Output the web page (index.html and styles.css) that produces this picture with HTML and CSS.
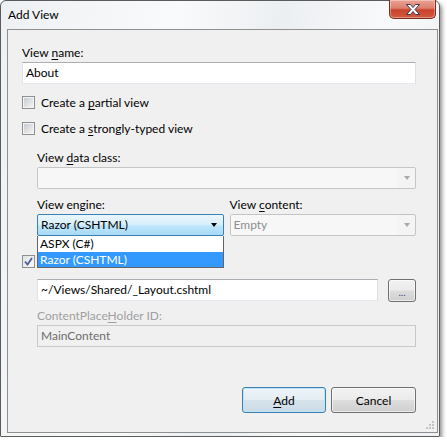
FILE: index.html
```html
<!DOCTYPE html>
<html lang="en">
<head>
    <meta charset="UTF-8">
    <title>Add View</title>
    <link rel="stylesheet" href="styles.css">
</head>
<body>

<div class="window">
    <div class="titlebar">
        <span class="title">Add View</span>
        <button class="close" title="Close">
            <svg width="16" height="11" viewBox="0 0 16 11">
                <path d="M1.5 0.5 H5.5 L8 3.5 L10.5 0.5 H14.5 L10 5.5 L14.5 10.5 H10.5 L8 7.5 L5.5 10.5 H1.5 L6 5.5 Z" fill="#fff" stroke="#3b3b4f" stroke-width="1" stroke-linejoin="round"/>
            </svg>
        </button>
    </div>

    <div class="client">
        <div class="lbl">View <u>n</u>ame:</div>
        <div class="textbox">About</div>

        <div class="check-row first"><span class="cb"></span><span>Create a <u>p</u>artial view</span></div>
        <div class="check-row"><span class="cb"></span><span>Create a <u>s</u>trongly-typed view</span></div>

        <div class="indent">
            <div class="lbl spaced">View <u>d</u>ata class:</div>
            <div class="combo disabled">
                <span class="combo-text"></span>
                <span class="combo-btn"><span class="arrow"></span></span>
            </div>

            <div class="pair">
                <div class="col">
                    <div class="lbl">View engine:</div>
                    <div class="combo-wrap">
                        <div class="combo open">
                            <span class="combo-text">Razor (CSHTML)</span>
                            <span class="combo-btn"><span class="arrow"></span></span>
                        </div>
                        <ul class="droplist">
                            <li>ASPX (C#)</li>
                            <li class="hl">Razor (CSHTML)</li>
                        </ul>
                    </div>
                </div>
                <div class="col">
                    <div class="lbl">View <u>c</u>ontent:</div>
                    <div class="combo disabled">
                        <span class="combo-text">Empty</span>
                        <span class="combo-btn"><span class="arrow"></span></span>
                    </div>
                </div>
            </div>
        </div>

        <!-- label of this checkbox sits under the open dropdown -->
        <div class="check-row layout">
            <span class="cb checked" title="Use a layout or master page">
                <svg width="9" height="9" viewBox="0 0 9 9"><path d="M1 4.5 L3.5 7.5 L8 1" fill="none" stroke="#4a5f97" stroke-width="1.8"/></svg>
            </span>
        </div>

        <div class="indent">
            <div class="path-row">
                <div class="textbox">~/Views/Shared/_Layout.cshtml</div>
                <button class="btn browse">...</button>
            </div>
            <div class="lbl muted">ContentPlace<u>H</u>older ID:</div>
            <div class="textbox readonly">MainContent</div>
        </div>

        <div class="actions">
            <button class="btn default"><u>A</u>dd</button>
            <button class="btn cancel">Cancel</button>
        </div>

        <svg class="grip" width="9" height="9" viewBox="0 0 9 9">
            <rect x="6" y="0" width="2" height="2" fill="#c4c4c4"/>
            <rect x="3" y="3" width="2" height="2" fill="#c4c4c4"/>
            <rect x="6" y="3" width="2" height="2" fill="#c4c4c4"/>
            <rect x="0" y="6" width="2" height="2" fill="#c4c4c4"/>
            <rect x="3" y="6" width="2" height="2" fill="#c4c4c4"/>
            <rect x="6" y="6" width="2" height="2" fill="#c4c4c4"/>
        </svg>
    </div>
</div>

</body>
</html>
```

FILE: styles.css
```css
body {
    margin: 0;
    background: #fff;
    font-family: Lato, "Liberation Sans", sans-serif;
    font-size: 12px;
    color: #000;
}

u {
    text-decoration: underline;
    text-underline-offset: 2px;
}

.window {
    width: 438px;
    height: 435px;
    border: 1px solid #5b5b5b;
    border-radius: 6px 6px 1px 1px;
    background: linear-gradient(100deg, #eef1f4 0%, #f9fafb 35%, #eceff2 55%, #f8f9fa 75%, #eef0f3 100%);
    box-shadow: 2px 3px 4px rgba(0, 0, 0, 0.45);
    display: flex;
    flex-direction: column;
}

.titlebar {
    height: 28px;
    display: flex;
    justify-content: space-between;
    align-items: flex-start;
}

.title {
    padding: 6px 0 0 7px;
    line-height: 15px;
}

.close {
    width: 47px;
    height: 19px;
    margin: -1px 3px 0 0;
    padding: 0;
    border: 1px solid #7b2a20;
    border-top: none;
    border-radius: 0 0 5px 5px;
    background: linear-gradient(#e9a395 0%, #dd7f6c 45%, #c8442c 55%, #d35b3f 100%);
    box-shadow: inset 0 0 0 1px rgba(255, 255, 255, 0.35);
    display: flex;
    align-items: center;
    justify-content: center;
}

.client {
    position: relative;
    flex: 1;
    margin: 0 1px 3px 6px;
    border: 1px solid #8e8f8f;
    background: #f0f0f0;
    padding: 15px 21px 0 14px;
    display: flex;
    flex-direction: column;
}

.lbl {
    line-height: 15px;
    height: 15px;
    margin-bottom: 2px;
    white-space: nowrap;
}

.lbl.muted {
    color: #a0a0a0;
    margin-top: 6px;
}

.textbox {
    height: 20px;
    line-height: 20px;
    padding: 0 3px;
    background: #fff;
    border: 1px solid;
    border-color: #abadb3 #dbdfe6 #e3e9ef #e2e3ea;
    white-space: nowrap;
}

.textbox.readonly {
    background: #f0f0f0;
    border-color: #c9c9c9;
    color: #6d6d6d;
}

.check-row {
    display: flex;
    align-items: center;
    gap: 6px;
    height: 13px;
    line-height: 13px;
    margin-top: 13px;
}

.check-row.first {
    margin-top: 12px;
}

.check-row.layout {
    margin-top: 19px;
}

.cb {
    box-sizing: border-box;
    width: 13px;
    height: 13px;
    border: 1px solid #8e8f8f;
    padding: 1px;
    background: linear-gradient(135deg, #c7cbd1, #f4f4f4) content-box, #f5f5f5;
    display: flex;
    align-items: center;
    justify-content: center;
}

.cb.checked {
    padding: 0;
    background: linear-gradient(135deg, #dfe2e6, #fafafa);
}

.indent {
    margin-left: 15px;
    display: flex;
    flex-direction: column;
}

.lbl.spaced {
    margin-top: 15px;
}

.combo {
    height: 20px;
    border: 1px solid #c5c5c5;
    border-radius: 2px;
    background: #f4f4f4;
    display: flex;
    align-items: center;
}

.combo-text {
    flex: 1;
    padding-left: 3px;
    line-height: 20px;
    white-space: nowrap;
}

.combo-btn {
    width: 17px;
    height: 20px;
    display: flex;
    align-items: center;
    justify-content: center;
}

.arrow {
    width: 0;
    height: 0;
    border-left: 3.5px solid transparent;
    border-right: 3.5px solid transparent;
    border-top: 4px solid #000;
}

.combo.disabled .combo-text {
    color: #8d8d8d;
    background: #f7f7f7;
    height: 20px;
}

.combo.disabled .arrow {
    border-top-color: #a9a9a9;
}

.combo.open {
    border-color: #3c7fb1;
    background: linear-gradient(#eaf6fd 0%, #d9f0fc 45%, #bee6fd 55%, #a7d9f5 100%);
}

.pair {
    display: grid;
    grid-template-columns: 1fr 1fr;
    column-gap: 6px;
    margin-top: 8px;
}

.combo-wrap {
    position: relative;
}

.droplist {
    position: absolute;
    top: 100%;
    left: 0;
    right: 0;
    z-index: 2;
    margin: 0;
    padding: 0;
    list-style: none;
    background: #fff;
    border: 1px solid #646464;
    border-top: none;
}

.droplist li {
    height: 16px;
    line-height: 16px;
    padding-left: 2px;
}

.droplist li.hl {
    background: #3399ff;
    color: #fff;
    height: 15px;
    line-height: 15px;
}

.path-row {
    display: flex;
    gap: 10px;
    margin-top: 11px;
}

.path-row .textbox {
    flex: 1;
}

.btn {
    font: inherit;
    color: #000;
    border: 1px solid #707070;
    border-radius: 3px;
    background: linear-gradient(#f2f2f2 0%, #ebebeb 48%, #dddddd 52%, #cfcfcf 100%);
    box-shadow: inset 0 0 0 1px rgba(255, 255, 255, 0.6);
    padding: 0;
}

.btn.browse {
    width: 28px;
    height: 23px;
    font-size: 10px;
    line-height: 24px;
    color: #3d3d8a;
}

.actions {
    display: flex;
    justify-content: flex-end;
    gap: 5px;
    margin-top: 40px;
}

.actions .btn {
    width: 84px;
    height: 26px;
}

.actions .btn.cancel {
    width: 85px;
}

.btn.default {
    border-color: #3c7fb1;
    background: linear-gradient(#eef5f9 0%, #e3edf3 48%, #d6e3ec 52%, #cbdbe6 100%);
    box-shadow: inset 0 0 0 1px #bfe3f8;
}

.grip {
    position: absolute;
    right: 2px;
    bottom: 2px;
}
```
